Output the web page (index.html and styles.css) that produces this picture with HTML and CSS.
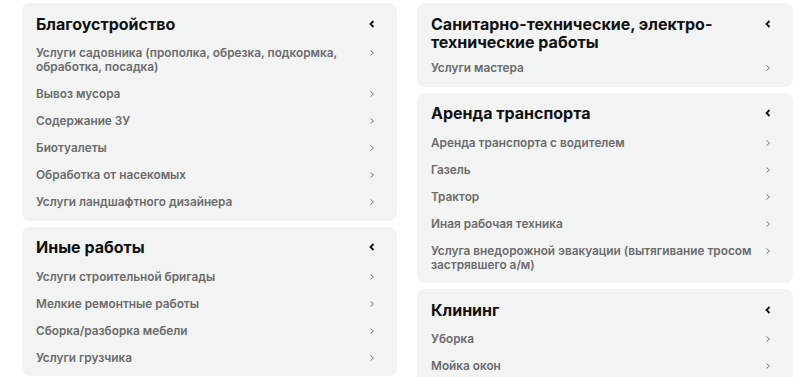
FILE: index.html
```html
<!DOCTYPE html>
<html lang="ru">
<head>
<meta charset="utf-8">
<link rel="stylesheet" href="styles.css">
</head>
<body>
<div class="page">
  <div class="col">
    <section class="card">
      <div class="head"><h2>Благоустройство</h2><svg class="chev-up" viewBox="0 0 6 8"><polyline points="4.5,1 1.5,4 4.5,7"/></svg></div>
      <ul>
        <li><span>Услуги садовника (прополка, обрезка, подкормка, обработка, посадка)</span><svg class="chev" viewBox="0 0 6 8"><polyline points="1.5,1.5 4.5,4 1.5,6.5"/></svg></li>
        <li><span>Вывоз мусора</span><svg class="chev" viewBox="0 0 6 8"><polyline points="1.5,1.5 4.5,4 1.5,6.5"/></svg></li>
        <li><span>Содержание ЗУ</span><svg class="chev" viewBox="0 0 6 8"><polyline points="1.5,1.5 4.5,4 1.5,6.5"/></svg></li>
        <li><span>Биотуалеты</span><svg class="chev" viewBox="0 0 6 8"><polyline points="1.5,1.5 4.5,4 1.5,6.5"/></svg></li>
        <li><span>Обработка от насекомых</span><svg class="chev" viewBox="0 0 6 8"><polyline points="1.5,1.5 4.5,4 1.5,6.5"/></svg></li>
        <li><span>Услуги ландшафтного дизайнера</span><svg class="chev" viewBox="0 0 6 8"><polyline points="1.5,1.5 4.5,4 1.5,6.5"/></svg></li>
      </ul>
    </section>
    <section class="card">
      <div class="head"><h2>Иные работы</h2><svg class="chev-up" viewBox="0 0 6 8"><polyline points="4.5,1 1.5,4 4.5,7"/></svg></div>
      <ul>
        <li><span>Услуги строительной бригады</span><svg class="chev" viewBox="0 0 6 8"><polyline points="1.5,1.5 4.5,4 1.5,6.5"/></svg></li>
        <li><span>Мелкие ремонтные работы</span><svg class="chev" viewBox="0 0 6 8"><polyline points="1.5,1.5 4.5,4 1.5,6.5"/></svg></li>
        <li><span>Сборка/разборка мебели</span><svg class="chev" viewBox="0 0 6 8"><polyline points="1.5,1.5 4.5,4 1.5,6.5"/></svg></li>
        <li><span>Услуги грузчика</span><svg class="chev" viewBox="0 0 6 8"><polyline points="1.5,1.5 4.5,4 1.5,6.5"/></svg></li>
      </ul>
    </section>
  </div>
  <div class="col">
    <section class="card">
      <div class="head head--wrap"><h2>Санитарно-технические, электро-технические работы</h2><svg class="chev-up" viewBox="0 0 6 8"><polyline points="4.5,1 1.5,4 4.5,7"/></svg></div>
      <ul>
        <li><span>Услуги мастера</span><svg class="chev" viewBox="0 0 6 8"><polyline points="1.5,1.5 4.5,4 1.5,6.5"/></svg></li>
      </ul>
    </section>
    <section class="card">
      <div class="head"><h2>Аренда транспорта</h2><svg class="chev-up" viewBox="0 0 6 8"><polyline points="4.5,1 1.5,4 4.5,7"/></svg></div>
      <ul>
        <li><span>Аренда транспорта с водителем</span><svg class="chev" viewBox="0 0 6 8"><polyline points="1.5,1.5 4.5,4 1.5,6.5"/></svg></li>
        <li><span>Газель</span><svg class="chev" viewBox="0 0 6 8"><polyline points="1.5,1.5 4.5,4 1.5,6.5"/></svg></li>
        <li><span>Трактор</span><svg class="chev" viewBox="0 0 6 8"><polyline points="1.5,1.5 4.5,4 1.5,6.5"/></svg></li>
        <li><span>Иная рабочая техника</span><svg class="chev" viewBox="0 0 6 8"><polyline points="1.5,1.5 4.5,4 1.5,6.5"/></svg></li>
        <li><span>Услуга внедорожной эвакуации (вытягивание тросом застрявшего а/м)</span><svg class="chev" viewBox="0 0 6 8"><polyline points="1.5,1.5 4.5,4 1.5,6.5"/></svg></li>
      </ul>
    </section>
    <section class="card">
      <div class="head"><h2>Клининг</h2><svg class="chev-up" viewBox="0 0 6 8"><polyline points="4.5,1 1.5,4 4.5,7"/></svg></div>
      <ul>
        <li><span>Уборка</span><svg class="chev" viewBox="0 0 6 8"><polyline points="1.5,1.5 4.5,4 1.5,6.5"/></svg></li>
        <li><span>Мойка окон</span><svg class="chev" viewBox="0 0 6 8"><polyline points="1.5,1.5 4.5,4 1.5,6.5"/></svg></li>
      </ul>
    </section>
  </div>
</div>
</body>
</html>
```

FILE: styles.css
```css
html, body {
  margin: 0;
  padding: 0;
  background: #ffffff;
  font-family: Inter, "Noto Sans", sans-serif;
}
.page {
  display: grid;
  grid-template-columns: 375px 376px;
  column-gap: 20px;
  padding: 3px 0 0 22px;
  align-items: start;
}
.col {
  display: flex;
  flex-direction: column;
  gap: 6px;
}
.card {
  background: #f2f3f3;
  border-radius: 8px;
  padding: 11.5px 21px 5px 14px;
}
.head {
  display: flex;
  align-items: flex-start;
  gap: 8px;
  margin-bottom: 7px;
}
.head--wrap {
  margin-bottom: 4px;
}
.head h2 {
  flex: 1;
  margin: 0;
  font-size: 16px;
  line-height: 18px;
  font-weight: 700;
  color: #111111;
}
.chev-up {
  width: 8px;
  height: 8px;
  margin-top: 5px;
  flex: none;
}
.chev-up polyline {
  fill: none;
  stroke: #111111;
  stroke-width: 1.8;
}
ul {
  list-style: none;
  margin: 0;
  padding: 0;
}
li {
  display: flex;
  align-items: flex-start;
  gap: 8px;
  padding: 6.5px 0;
  font-size: 11.8px;
  line-height: 14px;
  font-weight: 600;
  color: #6b6b6b;
}
li span {
  flex: 1;
}
.chev {
  width: 8px;
  height: 8px;
  margin-top: 3px;
  flex: none;
}
.chev polyline {
  fill: none;
  stroke: #7a7a7a;
  stroke-width: 1;
}
```
